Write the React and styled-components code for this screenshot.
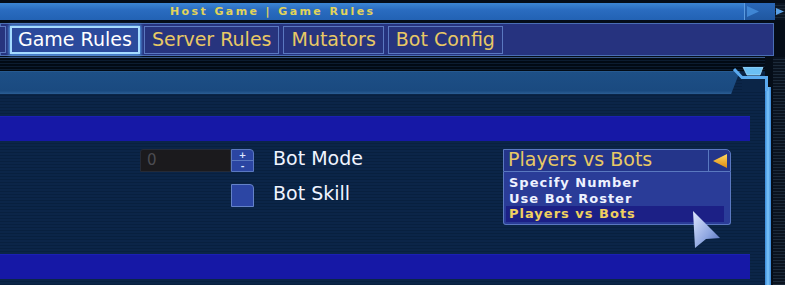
import styled, { createGlobalStyle } from "styled-components"

const GlobalStyle = createGlobalStyle`
  html, body {
    margin: 0;
    padding: 0;
    background: #050d18;
    overflow: hidden;
  }
`

const scan = (a, b) => `repeating-linear-gradient(180deg, ${a} 0px, ${a} 2px, ${b} 2px, ${b} 3px)`

const TABS = ["Game Rules", "Server Rules", "Mutators", "Bot Config"]
const MODES = ["Specify Number", "Use Bot Roster", "Players vs Bots"]

export default function App() {
  return (
    <Screen>
      <GlobalStyle />
      <TopRow>
        <TitleBar>Host Game | Game Rules</TitleBar>
        <TitleEnd>
          <svg width="30" height="17" viewBox="0 0 30 17">
            <polygon points="2,3 14,8.5 2,14" fill="#3f86d4" />
          </svg>
        </TitleEnd>
        <TitleTip>
          <svg width="10" height="17" viewBox="0 0 10 17">
            <polygon points="1,5 9,8.5 1,12" fill="#5aa0e4" />
          </svg>
        </TitleTip>
      </TopRow>

      <TabStrip>
        <Stub />
        {TABS.map((t, i) => (
          <Tab key={t} $active={i === 0}>{t}</Tab>
        ))}
      </TabStrip>

      <Body>
        <Panel>
          <Stripes />
          <HeaderBand />
          <Spacer />
          <BlueBand />
          <Content>
            <Fields>
              <NumberBox>0</NumberBox>
              <Spinner>
                <span>+</span>
                <span>-</span>
              </Spinner>
              <Label>Bot Mode</Label>
              <span />
              <Check />
              <Label>Bot Skill</Label>
            </Fields>
            <Combo>
              <ComboHead>
                <ComboValue>Players vs Bots</ComboValue>
                <ComboButton>
                  <svg width="16" height="16" viewBox="0 0 16 16">
                    <defs>
                      <linearGradient id="arr" x1="0" y1="0" x2="0" y2="1">
                        <stop offset="0" stopColor="#ffd860" />
                        <stop offset="1" stopColor="#e08a10" />
                      </linearGradient>
                    </defs>
                    <polygon points="1,8 15,1 15,15" fill="url(#arr)" />
                  </svg>
                </ComboButton>
              </ComboHead>
              <ComboList>
                {MODES.map((m, i) => (
                  <ComboItem key={m} $selected={i === 2}>{m}</ComboItem>
                ))}
              </ComboList>
            </Combo>
            <Cursor width="30" height="38" viewBox="0 0 30 38">
              <defs>
                <linearGradient id="cur" x1="0" y1="0" x2="1" y2="1">
                  <stop offset="0" stopColor="#dfe8ff" />
                  <stop offset="0.6" stopColor="#8ea6e0" />
                  <stop offset="1" stopColor="#4e68b4" />
                </linearGradient>
              </defs>
              <polygon points="1,0 28,27 14,28 3,37" fill="url(#cur)" />
            </Cursor>
          </Content>
          <BlueBand />
          <Corner width="40" height="24" viewBox="0 0 40 24">
            <polygon points="10,0 30,0 27,8 14,8" fill="#6cc0f4" stroke="#a8e0ff" strokeWidth="0.8" />
            <rect x="9" y="11" width="23" height="13" fill="#0b2547" />
            <polyline points="1,2 9,10.5 33.5,10.5 33.5,24" fill="none" stroke="#5aaaf0" strokeWidth="3" />
          </Corner>
        </Panel>
        <Rail>
          <RailBar />
          <RailScan />
        </Rail>
      </Body>
    </Screen>
  )
}

const Screen = styled.div`
  width: 785px;
  height: 285px;
  display: flex;
  flex-direction: column;
  background: #050d18;
  font-family: "DejaVu Sans", Verdana, sans-serif;
  overflow: hidden;
`

const TopRow = styled.div`
  display: flex;
  height: 17px;
  margin-top: 3px;
`

const TitleBar = styled.div`
  width: 745px;
  background: linear-gradient(180deg, #3c86d4 0%, #2a6cc0 40%, #2262b4 100%);
  border-right: 1px solid #5c9ce0;
  box-sizing: border-box;
  padding-left: 170px;
  color: #e2d45a;
  font-size: 11px;
  font-weight: bold;
  letter-spacing: 2.4px;
  line-height: 17px;
  white-space: nowrap;
`

const TitleEnd = styled.div`
  width: 30px;
  background: linear-gradient(180deg, #2a68b8, #1f57a0);
  display: flex;
`

const TitleTip = styled.div`
  width: 10px;
  display: flex;
  background: ${scan("#0b1522", "#1b2836")};
`

const TabStrip = styled.div`
  margin-top: 3px;
  width: 774px;
  height: 33px;
  box-sizing: border-box;
  border: 1px solid #4a6eb4;
  background: #26337f;
  display: flex;
  align-items: center;
  gap: 4px;
`

const Stub = styled.div`
  width: 5px;
  height: 25px;
  margin-left: -1px;
  border: 1px solid #5a78c0;
  border-left: none;
  background: #27347e;
`

const Tab = styled.div`
  height: ${p => (p.$active ? "24px" : "26px")};
  padding: 0 ${p => (p.$active ? "6px" : "7px")};
  display: flex;
  align-items: center;
  font-size: 19px;
  line-height: 1;
  white-space: nowrap;
  color: ${p => (p.$active ? "#ffffff" : "#e8c865")};
  background: ${p => (p.$active ? "#2b4a9c" : "#27347e")};
  border: ${p => (p.$active ? "2px solid #a6dcff" : "1px solid #5a78c0")};
  box-shadow: ${p => (p.$active ? "0 0 3px 1px #5aa8f0" : "none")};
`

const Body = styled.div`
  flex: 1;
  display: flex;
  margin-top: 1px;
`

const Panel = styled.div`
  position: relative;
  width: 765px;
  display: flex;
  flex-direction: column;
  background: ${scan("#0b2548", "#08203f")};
`

const Stripes = styled.div`
  height: 13px;
  border-top: 1px solid #3a5a8a;
  background: ${scan("#020a14", "#0c1c30")};
`

const HeaderBand = styled.div`
  width: 740px;
  height: 23px;
  box-sizing: border-box;
  background: linear-gradient(180deg, #1d4f86 0%, #1a4a80 85%, #2c5e94 100%);
  border-top: 1px solid #275a90;
  clip-path: polygon(0 0, 100% 0, 98.8% 100%, 0 100%);
`

const Spacer = styled.div`
  height: 22px;
`

const BlueBand = styled.div`
  width: 750px;
  height: 25px;
  background: #1618a6;
  border-top: 1px solid #1a20b4;
  box-sizing: border-box;
`

const Content = styled.div`
  position: relative;
  height: 113px;
  box-sizing: border-box;
  padding: 8px 0 0 140px;
  display: flex;
  align-items: flex-start;
`

const Fields = styled.div`
  width: 363px;
  display: grid;
  grid-template-columns: 91px 23px auto;
  grid-auto-rows: 23px;
  row-gap: 12px;
  align-items: center;
`

const NumberBox = styled.div`
  height: 23px;
  box-sizing: border-box;
  background: #1b1a1d;
  border: 1px solid #252a36;
  border-radius: 3px 0 0 0;
  color: #4c4c52;
  font-size: 15px;
  padding-left: 6px;
  line-height: 21px;
`

const Spinner = styled.div`
  height: 23px;
  box-sizing: border-box;
  display: grid;
  grid-template-rows: 1fr 1fr;
  background: #2b45a2;
  border: 1px solid #5a78c0;
  border-radius: 0 4px 0 0;
  overflow: hidden;

  span {
    color: #dfe6ff;
    font-size: 9px;
    font-weight: bold;
    line-height: 10px;
    text-align: center;
  }
  span + span {
    border-top: 1px solid #5a78c0;
  }
`

const Check = styled.div`
  height: 23px;
  box-sizing: border-box;
  background: #2c46a4;
  border: 1px solid #6482c8;
  border-radius: 0 4px 0 0;
`

const Label = styled.div`
  margin: 0 0 5px 19px;
  color: #f0f4ff;
  font-size: 19px;
  white-space: nowrap;
`

const Combo = styled.div`
  position: relative;
  width: 228px;
`

const ComboHead = styled.div`
  height: 23px;
  box-sizing: border-box;
  display: flex;
  background: #24358a;
  border: 1px solid #5a78c0;
  border-radius: 0 5px 0 0;
`

const ComboValue = styled.div`
  flex: 1;
  padding-left: 4px;
  color: #e8c865;
  font-size: 19px;
  line-height: 18px;
  white-space: nowrap;
`

const ComboButton = styled.div`
  width: 21px;
  border-left: 1px solid #5a78c0;
  display: flex;
  align-items: center;
  justify-content: center;
`

const ComboList = styled.div`
  position: absolute;
  top: 23px;
  left: 0;
  right: 0;
  height: 53px;
  box-sizing: border-box;
  padding: 3px 6px 0 2px;
  background: #2a3c98;
  border: 1px solid #5a78c0;
  border-top: none;
  border-radius: 0 0 3px 3px;
`

const ComboItem = styled.div`
  height: 15.5px;
  padding-left: 3px;
  font-size: 13px;
  font-weight: bold;
  letter-spacing: 1px;
  line-height: 15px;
  white-space: nowrap;
  color: ${p => (p.$selected ? "#f0d060" : "#eef2ff")};
  background: ${p => (p.$selected ? "#1c2086" : "transparent")};
`

const Cursor = styled.svg`
  position: absolute;
  left: 692px;
  top: 70px;
`

const Corner = styled.svg`
  position: absolute;
  right: -8px;
  top: 10px;
`

const Rail = styled.div`
  flex: 1;
  display: flex;
`

const RailBar = styled.div`
  width: 6px;
  margin-top: 30px;
  background: linear-gradient(90deg, #3a8ad8, #7ac4fa 50%, #3a86d4);
`

const RailScan = styled.div`
  flex: 1;
  margin-left: 2px;
  background: ${scan("#0a131f", "#1c2a3a")};
`
